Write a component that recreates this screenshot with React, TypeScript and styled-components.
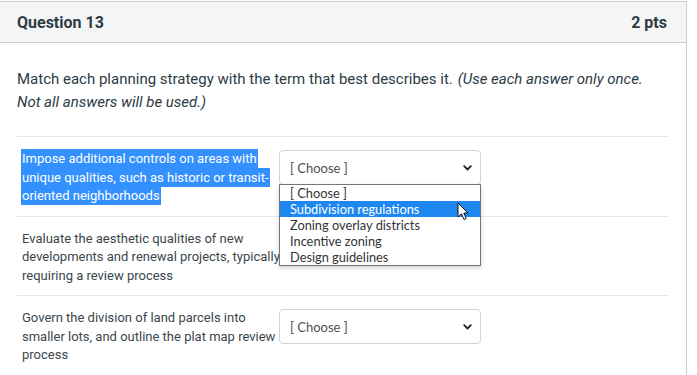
import React from "react";
import styled, { createGlobalStyle } from "styled-components";

const Global = createGlobalStyle`
  html, body { margin: 0; padding: 0; background: #ffffff; }
  body { padding-top: 1px; font-family: Roboto, "Liberation Sans", sans-serif; color: #2d3b45; }
  * { box-sizing: border-box; }
`;

const Card = styled.div`
  width: 687px;
  border-top: 1px solid #c7cdd1;
  border-right: 1px solid #c7cdd1;
  min-height: 380px;
`;

const Header = styled.div`
  display: flex;
  justify-content: space-between;
  align-items: center;
  height: 41px;
  padding: 0 19px 0 17px;
  background: #f5f5f5;
  border-bottom: 1px solid #c7cdd1;
  font-size: 16px;
  font-weight: 700;
  color: #2d3b45;
`;

const Body = styled.div`
  padding: 25px 18px 0 17px;
`;

const Prompt = styled.p`
  margin: 0 0 22px;
  max-width: 632px;
  font-size: 15px;
  line-height: 23px;
  color: #2d3b45;
`;

const Note = styled.i`
  margin-left: 5px;
`;

const Rows = styled.div`
  display: flex;
  flex-direction: column;
`;

const Row = styled.div`
  display: flex;
  align-items: flex-start;
  border-top: 1px solid #e3e5e7;
  padding: 13px 0 10px 5px;
  min-height: 79.5px;
`;

const Statement = styled.div`
  width: 262px;
  flex-shrink: 0;
  font-size: 13px;
  line-height: 18.5px;
  color: #3b464d;
`;

const Selected = styled.span`
  background: #3390ff;
  color: #ffffff;
  padding: 2px 1px;
  margin-left: -1px;
  box-decoration-break: clone;
  -webkit-box-decoration-break: clone;
`;

const SelectWrap = styled.div`
  position: relative;
  margin: 0 0 0 -5px;
`;

const SelectBox = styled.div`
  width: 202px;
  height: 35px;
  border: 1px solid #cfd4d8;
  border-radius: 4px;
  background: #ffffff;
  display: flex;
  align-items: center;
  justify-content: space-between;
  padding: 0 8px 0 10px;
  font-family: Lato, "Liberation Sans", sans-serif;
  font-size: 13px;
  color: #4a5258;
`;

const List = styled.div`
  position: absolute;
  top: 34px;
  left: 0;
  width: 202px;
  border: 1px solid #767676;
  background: #ffffff;
  box-shadow: 0 2px 4px rgba(0, 0, 0, 0.18);
  z-index: 2;
`;

const Option = styled.div<{ $active?: boolean }>`
  height: 16px;
  line-height: 16px;
  padding-left: 10px;
  font-family: Lato, "Liberation Sans", sans-serif;
  font-size: 12.8px;
  color: ${(p) => (p.$active ? "#ffffff" : "#333333")};
  background: ${(p) => (p.$active ? "#1e88f0" : "transparent")};
`;

const Pointer = styled.svg`
  position: absolute;
  left: 178px;
  top: 52px;
  z-index: 3;
`;

const Chevron = () => (
  <svg width="9" height="6" viewBox="0 0 9 6">
    <path d="M1.2 1.2 L4.5 4.5 L7.8 1.2" fill="none" stroke="#222" strokeWidth="1.8" strokeLinecap="round" strokeLinejoin="round" />
  </svg>
);

const Select: React.FC<{ open?: boolean }> = ({ open }) => (
  <SelectWrap>
    <SelectBox>
      <span>[ Choose ]</span>
      <Chevron />
    </SelectBox>
    {open && (
      <>
        <List>
          <Option>[ Choose ]</Option>
          <Option $active>Subdivision regulations</Option>
          <Option>Zoning overlay districts</Option>
          <Option>Incentive zoning</Option>
          <Option>Design guidelines</Option>
        </List>
        <Pointer width="12" height="19" viewBox="0 0 12 19">
          <path d="M1 1 L1 15 L4.5 11.8 L7 17.5 L9.2 16.5 L6.8 11 L11 11 Z" fill="#ffffff" stroke="#111" strokeWidth="1" strokeLinejoin="round" />
        </Pointer>
      </>
    )}
  </SelectWrap>
);

export default function App() {
  return (
    <>
      <Global />
      <Card>
        <Header>
          <span>Question 13</span>
          <span>2 pts</span>
        </Header>
        <Body>
          <Prompt>
            Match each planning strategy with the term that best describes it.
            <Note>(Use each answer only once. Not all answers will be used.)</Note>
          </Prompt>
          <Rows>
            <Row>
              <Statement>
                <Selected>
                  Impose additional controls on areas with unique qualities, such as historic or transit-oriented neighborhoods
                </Selected>
              </Statement>
              <Select open />
            </Row>
            <Row>
              <Statement>
                Evaluate the aesthetic qualities of new developments and renewal projects, typically requiring a review process
              </Statement>
            </Row>
            <Row>
              <Statement>
                Govern the division of land parcels into smaller lots, and outline the plat map review process
              </Statement>
              <Select />
            </Row>
          </Rows>
        </Body>
      </Card>
    </>
  );
}
